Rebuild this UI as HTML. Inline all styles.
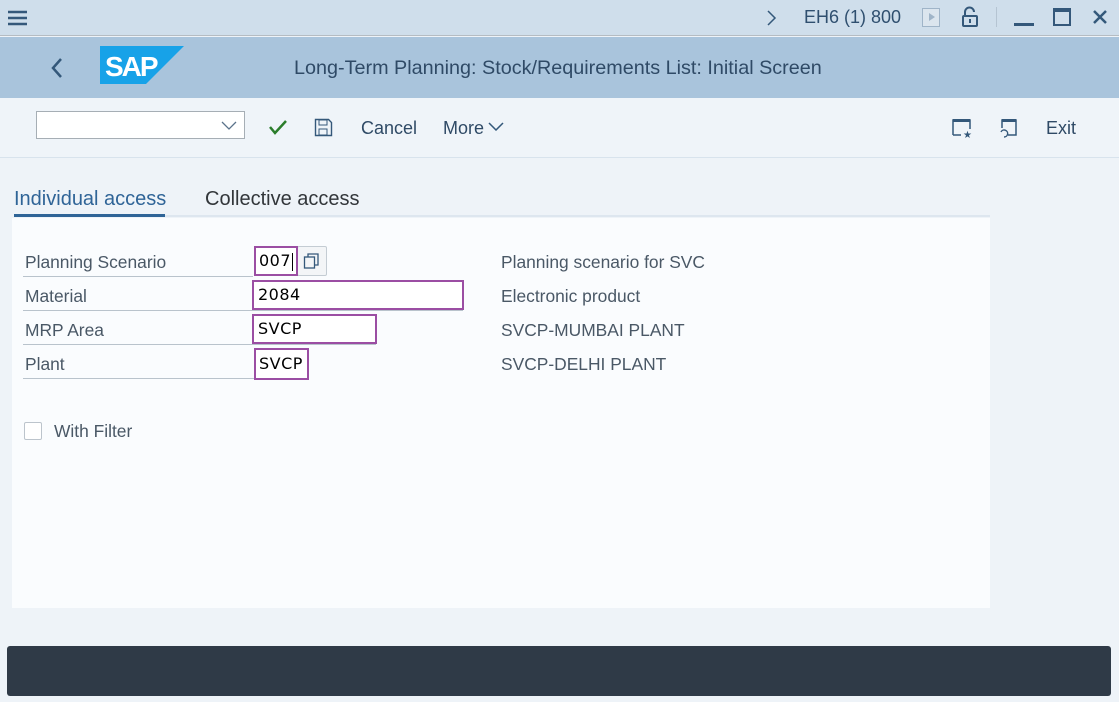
<!DOCTYPE html>
<html><head><meta charset="utf-8"><style>
*{margin:0;padding:0;box-sizing:border-box}
body{width:1119px;height:702px;background:#eef3f8;font-family:"Liberation Sans",Arial,sans-serif;position:relative;overflow:hidden}
.a{position:absolute}
.t{font-size:18px;color:#32363a;white-space:nowrap}
.lbl{font-size:17.4px;color:#4a5866;white-space:nowrap}
.fld{position:absolute;border:2px solid #9b4ea3;background:#fff;font-size:16px;color:#000;padding-left:4px;line-height:24px;font-family:"DejaVu Sans",sans-serif;letter-spacing:0.5px}
.ln{position:absolute;height:1px;background:#b9c3cc}
</style></head><body>
<div class="a" style="left:0;top:0;width:1119px;height:36px;background:#cfdeeb;border-bottom:1px solid #b5bcc2"></div>
<svg class="a" style="left:7px;top:9px" width="22" height="18"><g stroke="#34587a" stroke-width="2.4"><line x1="1" y1="3" x2="20" y2="3"/><line x1="1" y1="9" x2="20" y2="9"/><line x1="1" y1="15" x2="20" y2="15"/></g></svg>
<svg class="a" style="left:766px;top:9px" width="12" height="18"><path d="M2 2l7 7-7 7" stroke="#34587a" stroke-width="1.5" fill="none"/></svg>
<div class="a t" style="left:804px;top:7px;color:#2f4f6f">EH6 (1) 800</div>
<div class="a" style="left:922px;top:8px;width:18px;height:19px;border:1px solid #9fb4c8;background:#dbe5ee"></div>
<svg class="a" style="left:928px;top:12px" width="8" height="10"><path d="M1 1l6 4-6 4z" fill="#9fb4c8"/></svg>
<svg class="a" style="left:960px;top:6px" width="20" height="22"><path d="M5 10V6a4.5 4.5 0 0 1 9 0" stroke="#34587a" stroke-width="2" fill="none"/><rect x="3" y="10" width="14" height="10" rx="1" stroke="#34587a" stroke-width="2" fill="none"/><rect x="9" y="13" width="2" height="4" fill="#34587a"/></svg>
<div class="a" style="left:996px;top:7px;width:1px;height:20px;background:#b5c4d2"></div>
<div class="a" style="left:1014px;top:23px;width:20px;height:3px;background:#34587a"></div>
<div class="a" style="left:1053px;top:8px;width:18px;height:18px;border:2px solid #34587a;border-top-width:4px"></div>
<svg class="a" style="left:1092px;top:9px" width="16" height="16"><path d="M2 2l12 12M14 2L2 14" stroke="#34587a" stroke-width="2.5"/></svg>
<div class="a" style="left:0;top:37px;width:1119px;height:61px;background:#a9c4dc"></div>
<svg class="a" style="left:50px;top:57px" width="14" height="22"><path d="M11 2L3 11l8 9" stroke="#34587a" stroke-width="2.5" fill="none"/></svg>
<svg class="a" style="left:100px;top:46px" width="84" height="38"><polygon points="0,0 84,0 46,38 0,38" fill="#17a2e8"/><text x="5" y="30" font-family="Liberation Sans" font-weight="bold" font-size="28" fill="#fff" letter-spacing="-2">SAP</text></svg>
<div class="a" style="left:294px;top:57px;font-size:19.8px;color:#2f4a66">Long-Term Planning: Stock/Requirements List: Initial Screen</div>
<div class="a" style="left:0;top:98px;width:1119px;height:60px;background:#eff4f9;border-bottom:1px solid #d8e3ed"></div>
<div class="a" style="left:36px;top:111px;width:209px;height:28px;background:#fff;border:1px solid #a6aeb5"></div>
<svg class="a" style="left:221px;top:121px" width="16" height="9"><path d="M1 1l7 7 7-7" stroke="#5b738b" stroke-width="1.3" fill="none"/></svg>
<svg class="a" style="left:268px;top:119px" width="20" height="17"><path d="M2 8l5 6L18 2" stroke="#2b7d2b" stroke-width="2.5" fill="none"/></svg>
<svg class="a" style="left:314px;top:118px" width="19" height="19"><path d="M1.5 1.5h13l3 3v13h-16z" stroke="#34587a" stroke-width="1.4" fill="none"/><rect x="5" y="2" width="8" height="5" stroke="#34587a" fill="none"/><rect x="5" y="11" width="8" height="6" stroke="#34587a" fill="none"/></svg>
<div class="a t" style="left:361px;top:118px;color:#2f4a66">Cancel</div>
<div class="a t" style="left:443px;top:118px;color:#2f4a66">More</div>
<svg class="a" style="left:488px;top:122px" width="16" height="9"><path d="M1 1l7 7 7-7" stroke="#34587a" stroke-width="1.5" fill="none"/></svg>
<svg class="a" style="left:952px;top:118px" width="20" height="20"><path d="M1 17V2h17v9" stroke="#34587a" stroke-width="1.5" fill="none"/><rect x="1" y="1" width="17" height="3" fill="#34587a"/><path d="M1 17h8" stroke="#34587a" stroke-width="1.5"/><text x="11" y="20" font-size="10" fill="#34587a">★</text></svg>
<svg class="a" style="left:998px;top:118px" width="20" height="20"><path d="M4 10V2h14v15H10" stroke="#34587a" stroke-width="1.5" fill="none"/><rect x="4" y="1" width="14" height="3" fill="#34587a"/><path d="M6 19a3.5 3.5 0 1 0 -3-5" stroke="#34587a" stroke-width="1.4" fill="none"/></svg>
<div class="a t" style="left:1046px;top:118px;color:#2f4a66">Exit</div>
<div class="a" style="left:14px;top:188px;font-size:20px;color:#2f6497">Individual access</div>
<div class="a" style="left:205px;top:188px;font-size:20px;color:#32363a">Collective access</div>
<div class="a" style="left:14px;top:215px;width:976px;height:2px;background:#dde6ef"></div>
<div class="a" style="left:14px;top:214px;width:151px;height:3px;background:#2f6497"></div>
<div class="a" style="left:12px;top:218px;width:978px;height:390px;background:#fafcfe"></div>
<div class="a lbl" style="left:25px;top:252px">Planning Scenario</div>
<div class="a lbl" style="left:25px;top:286px">Material</div>
<div class="a lbl" style="left:25px;top:320px">MRP Area</div>
<div class="a lbl" style="left:25px;top:354px">Plant</div>
<div class="ln" style="left:23px;top:276px;width:230px"></div>
<div class="ln" style="left:23px;top:310px;width:440px"></div>
<div class="ln" style="left:23px;top:344px;width:353px"></div>
<div class="ln" style="left:23px;top:378px;width:232px"></div>
<div class="a" style="left:297px;top:246px;width:30px;height:30px;background:#f3f5f7;border:1px solid #c4ccd3;border-radius:2px"></div>
<svg class="a" style="left:303px;top:252px" width="18" height="18"><rect x="1.5" y="5" width="10" height="11" stroke="#34587a" stroke-width="1.3" fill="none"/><path d="M5 5V2h10v11h-3.5" stroke="#34587a" stroke-width="1.3" fill="none"/></svg>
<div class="fld" style="left:254px;top:246px;width:44px;height:30px;line-height:26px;padding-left:3px">007<span style="display:inline-block;width:1px;height:18px;background:#000;vertical-align:middle;margin-left:1px"></span></div>
<div class="fld" style="left:252px;top:280px;width:212px;height:30px;line-height:26px">2084</div>
<div class="fld" style="left:252px;top:314px;width:125px;height:30px;line-height:26px">SVCP</div>
<div class="fld" style="left:254px;top:348px;width:55px;height:32px;line-height:28px;padding-left:3px">SVCP</div>
<div class="a lbl" style="left:501px;top:252px">Planning scenario for SVC</div>
<div class="a lbl" style="left:501px;top:286px">Electronic product</div>
<div class="a lbl" style="left:501px;top:320px">SVCP-MUMBAI PLANT</div>
<div class="a lbl" style="left:501px;top:354px">SVCP-DELHI PLANT</div>
<div class="a" style="left:24px;top:422px;width:18px;height:18px;border:1px solid #bcc4cc;background:#fff;border-radius:2px"></div>
<div class="a lbl" style="left:54px;top:421px">With Filter</div>
<div class="a" style="left:7px;top:646px;width:1104px;height:50px;background:#2f3a47;border-radius:3px"></div>
</body></html>
